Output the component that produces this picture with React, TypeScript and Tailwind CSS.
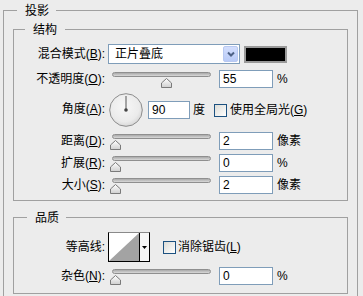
import React from "react";

const Mn = ({ k }: { k: string }) => (
  <span>
    (<span className="underline underline-offset-[1px]">{k}</span>):
  </span>
);

function Label({ children, className = "" }: { children: React.ReactNode; className?: string }) {
  return (
    <div className={"w-[91px] shrink-0 text-right leading-[14px] whitespace-nowrap " + className}>
      {children}
    </div>
  );
}

function Field({ value, w = 54 }: { value: string; w?: number }) {
  return (
    <div
      className={
        "h-[18px] shrink-0 border border-[#7f9db9] bg-white pl-[3px] leading-[16px] text-[12px] " +
        (w === 54 ? "w-[54px]" : "w-[42px]")
      }
    >
      {value}
    </div>
  );
}

function Slider({ frac }: { frac: number }) {
  return (
    <div className="relative h-[18px] w-[107px] shrink-0">
      <div className="mx-[4px] mt-[4px] h-[5px] rounded-full border border-[#8f8f8f] bg-gradient-to-b from-[#a9a9a9] to-[#d9d9d9]" />
      <svg
        className="absolute top-[6px]"
        style={{ left: 2 + Math.round(frac * 93) }}
        width="11"
        height="10"
        viewBox="0 0 11 10"
      >
        <defs>
          <linearGradient id="tg" x1="0" y1="0" x2="0" y2="1">
            <stop offset="0" stopColor="#ffffff" />
            <stop offset="1" stopColor="#cfcfcf" />
          </linearGradient>
        </defs>
        <polygon points="5.5,0.5 10.5,5 10.5,9.5 0.5,9.5 0.5,5" fill="url(#tg)" stroke="#7a7a7a" strokeWidth="1" />
      </svg>
    </div>
  );
}

function Check() {
  return (
    <div className="h-[13px] w-[13px] shrink-0 border border-[#1c5180] bg-gradient-to-br from-[#dcdcd7] to-white" />
  );
}

export default function App() {
  return (
    <div className="h-[296px] w-[363px] overflow-hidden bg-[#ececec] text-[12px] text-black font-['Liberation_Sans','Noto_Sans_CJK_SC',sans-serif]">
      <fieldset className="m-0 ml-[3px] w-[355px] border border-[#a0a0a0] p-0">
        <legend className="ml-[13px] pl-[8px] pr-[7px] pt-[3px] pb-[2px] leading-[16px]">投影</legend>
        <div className="px-[9px] pb-[10px]">
          {/* 结构 */}
          <fieldset className="m-0 border border-[#a0a0a0] p-0">
            <legend className="ml-[11px] pl-[8px] pr-[8px] pt-[1px] pb-0 leading-[16px]">结构</legend>
            <div className="flex flex-col pt-[6px] pb-[6px]">
              {/* blend mode */}
              <div className="flex h-[20px] items-center">
                <Label>
                  混合模式<Mn k="B" />
                </Label>
                <div className="ml-[3px] flex h-[20px] w-[132px] items-center border border-[#7f9db9] bg-white">
                  <span className="ml-[6px] flex-1 leading-[16px]">正片叠底</span>
                  <div className="mr-[1px] flex h-[16px] w-[15px] items-center justify-center rounded-[2px] border border-[#b8c9f1] bg-gradient-to-b from-[#d3defd] to-[#b9cbf7]">
                    <svg width="8" height="6" viewBox="0 0 8 6">
                      <polyline points="1,1.5 4,4.5 7,1.5" fill="none" stroke="#4d6185" strokeWidth="2" />
                    </svg>
                  </div>
                </div>
                <div className="ml-[4px] h-[17px] w-[43px] border-2 border-[#9a9a9a] bg-black" />
              </div>
              {/* opacity */}
              <div className="mt-[6px] flex h-[18px] items-center">
                <Label>
                  不透明度<Mn k="O" />
                </Label>
                <div className="ml-[3px]">
                  <Slider frac={0.55} />
                </div>
                <div className="ml-[4px]">
                  <Field value="55" />
                </div>
                <span className="ml-[4px]">%</span>
              </div>
              {/* angle */}
              <div className="mt-[5px] flex h-[34px] items-center">
                <Label className="mb-[3px]">
                  角度<Mn k="A" />
                </Label>
                <svg className="ml-[4px] shrink-0" width="34" height="34" viewBox="0 0 34 34">
                  <defs>
                    <radialGradient id="dg" cx="0.45" cy="0.4" r="0.65">
                      <stop offset="0" stopColor="#f7f7f7" />
                      <stop offset="0.7" stopColor="#ebebeb" />
                      <stop offset="1" stopColor="#d2d2d2" />
                    </radialGradient>
                  </defs>
                  <circle cx="17" cy="17" r="16.3" fill="url(#dg)" stroke="#8c8c8c" strokeWidth="1" />
                  <line x1="17" y1="17" x2="17" y2="3" stroke="#555" strokeWidth="1" />
                  <circle cx="17" cy="17" r="1.8" fill="#444" />
                </svg>
                <div className="ml-[5px]">
                  <Field value="90" w={42} />
                </div>
                <span className="ml-[3px]">度</span>
                <div className="ml-[9px]">
                  <Check />
                </div>
                <span className="ml-[3px] whitespace-nowrap">
                  使用全局光(<span className="underline underline-offset-[1px]">G</span>)
                </span>
              </div>
              {/* distance */}
              <div className="mt-[5px] flex h-[18px] items-center">
                <Label>
                  距离<Mn k="D" />
                </Label>
                <div className="ml-[3px]">
                  <Slider frac={0} />
                </div>
                <div className="ml-[4px]">
                  <Field value="2" />
                </div>
                <span className="ml-[4px]">像素</span>
              </div>
              {/* spread */}
              <div className="mt-[4px] flex h-[18px] items-center">
                <Label>
                  扩展<Mn k="R" />
                </Label>
                <div className="ml-[3px]">
                  <Slider frac={0} />
                </div>
                <div className="ml-[4px]">
                  <Field value="0" />
                </div>
                <span className="ml-[4px]">%</span>
              </div>
              {/* size */}
              <div className="mt-[4px] flex h-[18px] items-center">
                <Label>
                  大小<Mn k="S" />
                </Label>
                <div className="ml-[3px]">
                  <Slider frac={0} />
                </div>
                <div className="ml-[4px]">
                  <Field value="2" />
                </div>
                <span className="ml-[4px]">像素</span>
              </div>
            </div>
          </fieldset>

          {/* 品质 */}
          <fieldset className="m-0 mt-[8px] border border-[#a0a0a0] p-0">
            <legend className="ml-[13px] pl-[8px] pr-[7px] pt-[1px] pb-0 leading-[16px]">品质</legend>
            <div className="flex flex-col pt-[6px] pb-[8px]">
              <div className="flex h-[30px] items-center">
                <Label>等高线:</Label>
                <div className="ml-[3px] flex h-[30px] w-[42px] border border-black border-t-[#8a8a8a] bg-white">
                  <svg width="30" height="28" viewBox="0 0 30 28" className="shrink-0">
                    <polygon points="0,28 30,0 30,28" fill="#a3a3a3" />
                  </svg>
                  <div className="flex w-[10px] items-center justify-center border-l border-black bg-[#f6f6f6]">
                    <svg width="5" height="3" viewBox="0 0 5 3">
                      <polygon points="0,0 5,0 2.5,3" fill="#000" />
                    </svg>
                  </div>
                </div>
                <div className="ml-[13px]">
                  <Check />
                </div>
                <span className="ml-[2px] whitespace-nowrap">
                  消除锯齿(<span className="underline underline-offset-[1px]">L</span>)
                </span>
              </div>
              <div className="mt-[5px] flex h-[18px] items-center">
                <Label>
                  杂色<Mn k="N" />
                </Label>
                <div className="ml-[3px]">
                  <Slider frac={0} />
                </div>
                <div className="ml-[4px]">
                  <Field value="0" />
                </div>
                <span className="ml-[4px]">%</span>
              </div>
            </div>
          </fieldset>
        </div>
      </fieldset>
    </div>
  );
}
